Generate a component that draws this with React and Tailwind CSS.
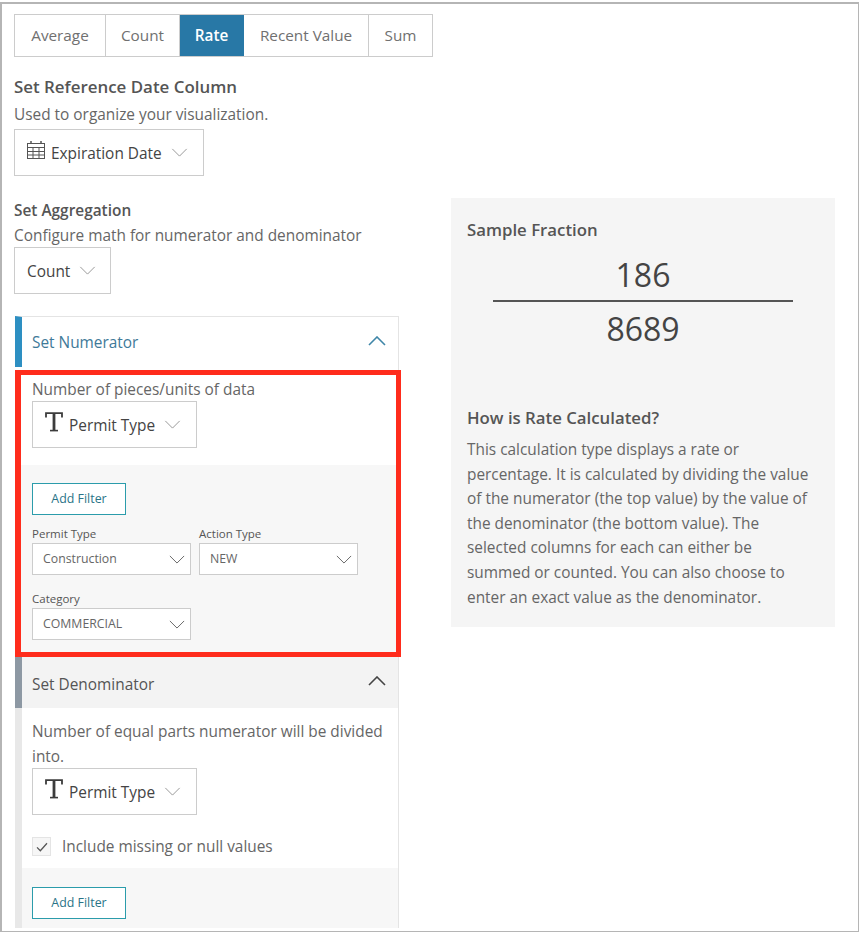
import React from "react";

const font = { fontFamily: '"Open Sans", "Noto Sans", sans-serif' };

function Chevron({ className = "", strokeWidth = 1.1 }) {
  return (
    <svg viewBox="0 0 18 10" className={className} fill="none" stroke="currentColor" strokeWidth={strokeWidth}>
      <polyline points="1,1 9,9 17,1" />
    </svg>
  );
}

function CalendarIcon() {
  return (
    <svg viewBox="0 0 18 18" className="-mt-[5px] h-[18px] w-[18px] text-[#555]" fill="none" stroke="currentColor" strokeWidth="1">
      <rect x="0.5" y="2.5" width="17" height="15" />
      <path d="M0.5 6.5h17M0.5 10.5h17M0.5 14h17M6 6.5v11M12 6.5v11" />
      <path d="M4 0v3M14 0v3" strokeWidth="1.5" />
    </svg>
  );
}

function TypeIcon() {
  return (
    <svg viewBox="0 0 18 20" className="-mt-[5px] h-[20px] w-[18px] text-[#3c3c3c]" fill="none" stroke="currentColor">
      <path d="M1 5.5V1.2h16V5.5" strokeWidth="1.8" />
      <path d="M9 1.2v17" strokeWidth="2.8" />
      <path d="M5 18.6h8" strokeWidth="1.6" />
    </svg>
  );
}

function Tab({ label, width, active }) {
  return (
    <div
      className={
        "flex h-full items-center justify-center border-r text-[15.3px] last:border-r-0 " +
        (active ? "border-[#2878a6] bg-[#2878a6] font-semibold text-white" : "border-[#ccc] text-[#707070]")
      }
      style={{ width }}
    >
      {label}
    </div>
  );
}

function ColumnSelect({ icon, label, width }) {
  return (
    <div className="flex h-[47px] items-center gap-[6px] border border-[#ccc] bg-white pl-[12px] text-[15.4px] text-[#444]" style={{ width }}>
      {icon}
      <span className="pt-[2px]">{label}</span>
      <Chevron className="ml-[3px] h-[9px] w-[17px] text-[#999]" />
    </div>
  );
}

function FilterSelect({ label, value }) {
  return (
    <div className="w-[159px]">
      <div className="text-[11.5px] leading-[16px] text-[#555]">{label}</div>
      <div className="mt-[1px] flex h-[32px] items-center justify-between border border-[#ccc] bg-white pl-[10px] pr-[4px] text-[12.3px] text-[#666]">
        <span className="pt-[1px]">{value}</span>
        <Chevron className="mr-[1px] h-[9px] w-[16px] text-[#666]" />
      </div>
    </div>
  );
}

function AddFilter() {
  return (
    <div className="flex h-[32px] w-[94px] items-center justify-center border border-[#2b9cab] bg-white text-[12.4px] text-[#2a7487]">
      Add Filter
    </div>
  );
}

export default function App() {
  return (
    <div className="h-[933px] w-[860px] overflow-hidden bg-white pt-[2px] pr-[1px]" style={font}>
      <div className="flex h-[930px] overflow-hidden border-t-2 border-r border-b border-l-2 border-[#b5b5b5] pl-[12px] pt-[10px]">
        {/* Left column */}
        <div className="w-[437px] shrink-0">
          <div className="flex h-[43px] w-[419px] border border-[#ccc]">
            <Tab label="Average" width={91} />
            <Tab label="Count" width={74} />
            <Tab label="Rate" width={64} active />
            <Tab label="Recent Value" width={125} />
            <Tab label="Sum" width={63} />
          </div>

          <h2 className="mt-[18px] text-[16.9px] font-semibold leading-[24px] text-[#555]">Set Reference Date Column</h2>
          <p className="mt-[5px] text-[15.4px] leading-[22px] text-[#666]">Used to organize your visualization.</p>
          <div className="mt-[3px]">
            <ColumnSelect icon={<CalendarIcon />} label="Expiration Date" width={190} />
          </div>

          <h3 className="mt-[24px] text-[15.4px] font-semibold leading-[22px] text-[#555]">Set Aggregation</h3>
          <p className="mt-[3px] text-[15.4px] leading-[22px] text-[#666]">Configure math for numerator and denominator</p>
          <ColumnSelect label="Count" width={97} />

          {/* Accordion */}
          <div className="ml-[1px] mt-[22px] w-[384px] border-r border-[#e4e4e4]">
            <div className="flex h-[51px] items-center justify-between border-t border-[#e4e4e4] border-l-[7px] border-l-[#2d8fc2] pl-[10px] pr-[12px]">
              <span className="pt-[2px] text-[15.4px] text-[#3f7a99]">Set Numerator</span>
              <Chevron className="-mt-[3px] h-[10px] w-[18px] rotate-180 text-[#3f86a8]" strokeWidth={1.6} />
            </div>

            <div className="relative">
              <div className="h-[98px] bg-white pl-[17px] pt-[12px]">
                <p className="text-[15.4px] leading-[22px] text-[#666]">Number of pieces/units of data</p>
                <ColumnSelect icon={<TypeIcon />} label="Permit Type" width={165} />
              </div>
              <div className="h-[192px] bg-[#f7f7f7] pl-[17px] pt-[18px]">
                <AddFilter />
                <div className="mt-[11px] flex gap-[8px]">
                  <FilterSelect label="Permit Type" value="Construction" />
                  <FilterSelect label="Action Type" value="NEW" />
                </div>
                <div className="mt-[16px]">
                  <FilterSelect label="Category" value="COMMERCIAL" />
                </div>
              </div>
              {/* Red highlight over the numerator body */}
              <div className="pointer-events-none absolute -right-[3px] bottom-0 left-0 top-[3px] border-[5px] border-l-[6px] border-[#ff2c1c]" />
            </div>

            <div className="flex h-[51px] items-center justify-between border-l-[7px] border-l-[#8d98a3] bg-[#f3f3f3] pl-[10px] pr-[12px]">
              <span className="pt-[5px] text-[15.4px] text-[#555]">Set Denominator</span>
              <Chevron className="-mt-[4px] h-[10px] w-[18px] rotate-180 text-[#444]" strokeWidth={1.6} />
            </div>

            <div className="border-l-[7px] border-l-[#e8e8e8]">
              <div className="h-[160px] bg-white pl-[10px] pr-[8px] pt-[11px]">
                <p className="text-[15.4px] leading-[25px] text-[#666]">Number of equal parts numerator will be divided into.</p>
                <div className="-mt-[1px]">
                  <ColumnSelect icon={<TypeIcon />} label="Permit Type" width={165} />
                </div>
                <div className="mt-[20px] flex items-center gap-[11px]">
                  <div className="flex h-[19px] w-[19px] items-center justify-center border border-[#e4e4e4] bg-[#f6f6f6]">
                    <svg viewBox="0 0 14 12" className="h-[10px] w-[12px] text-[#555]" fill="none" stroke="currentColor" strokeWidth="1.5">
                      <polyline points="1,6.5 5,10.5 13,1.5" />
                    </svg>
                  </div>
                  <span className="text-[15.4px] text-[#666]">Include missing or null values</span>
                </div>
              </div>
              <div className="h-[60px] bg-[#f7f7f7] pl-[10px] pt-[19px]">
                <AddFilter />
              </div>
            </div>
          </div>
        </div>

        {/* Right column */}
        <aside className="mt-[184px] h-[429px] w-[384px] shrink-0 bg-[#f5f5f5] pl-[16px] pr-[24px] pt-[20px]">
          <h3 className="text-[16.8px] font-semibold leading-[24px] text-[#555]">Sample Fraction</h3>
          <div className="ml-[26px] mt-[11px] w-[300px] text-center text-[32px] leading-[44px] text-[#444]">
            <div className="border-b-2 border-[#555] pb-[3px]">186</div>
            <div className="pt-[5px]">8689</div>
          </div>
          <h3 className="mt-[55px] text-[16.8px] font-semibold leading-[24px] text-[#555]">How is Rate Calculated?</h3>
          <p className="mt-[8px] text-[15.4px] leading-[24.6px] text-[#666]">
            This calculation type displays a rate or percentage. It is calculated by dividing the value of the numerator (the top value) by the value of the denominator (the bottom value). The selected columns for each can either be summed or counted. You can also choose to enter an exact value as the denominator.
          </p>
        </aside>
      </div>
    </div>
  );
}
